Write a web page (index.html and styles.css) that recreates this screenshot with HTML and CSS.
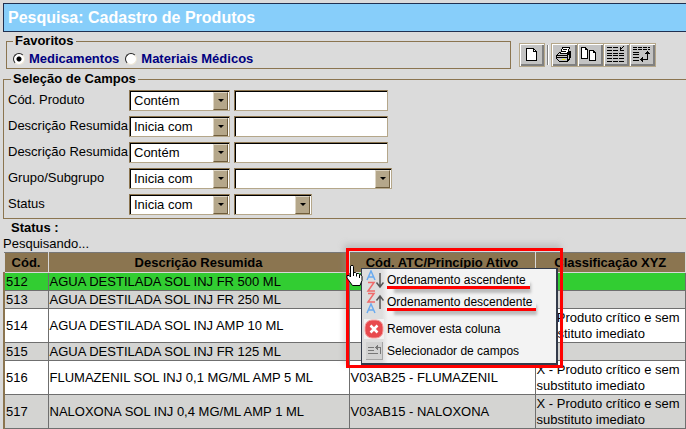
FILE: index.html
```html
<!DOCTYPE html>
<html lang="pt-BR">
<head>
<meta charset="utf-8">
<title>Pesquisa: Cadastro de Produtos</title>
<link rel="stylesheet" href="styles.css">
</head>
<body>
<h1 class="title">Pesquisa: Cadastro de Produtos</h1>
<form class="search">
  <div class="top">
    <fieldset class="favorites">
      <legend>Favoritos</legend>
      <label><input type="radio" name="fav" checked>Medicamentos</label>
      <label><input type="radio" name="fav">Materiais Médicos</label>
    </fieldset>
    <div class="toolbar">
      <button type="button" class="tool" aria-label="Novo"><svg width="20" height="18" shape-rendering="crispEdges"><path d="M4.500 2.500h7l3 3v9h-10z" fill="#fff" stroke="#000"/><path d="M11.500 2.500v3h3" fill="none" stroke="#000"/></svg></button>
      <span class="divider"></span>
      <div class="group">
        <button type="button" class="tool" aria-label="Imprimir"><svg width="20" height="18" shape-rendering="crispEdges"><path d="M2.500 9.500l3-3h8l3-1v6l-3 4h-8l-3-3z" fill="#c3c3c3" stroke="#000"/><path d="M6.500 7.500l2-6h7l-2 6z" fill="#fff" stroke="#000"/><path d="M9 3.500h4M8 5.500h4M3 9.500h10M13 9.500l3-3M3 11.500h10M13.500 9v6M15 8v5" fill="none" stroke="#000"/><path d="M8 13.500h3" stroke="#ee0"/></svg></button>
        <button type="button" class="tool" aria-label="Copiar"><svg width="20" height="18" shape-rendering="crispEdges"><path d="M1.500 1.500h4l2 2v9h-6zM9.500 4.500h4l2 2v8h-6z" fill="#fff" stroke="#000"/><path d="M5.500 1.500v2h2M13.500 4.500v2h2" fill="none" stroke="#000"/></svg></button>
        <button type="button" class="tool" aria-label="Recolher colunas"><svg width="20" height="18" shape-rendering="crispEdges"><path d="M1 1.500h5M7 1.500h5M1 4.500h5M7 4.500h5M1 7.500h5M7 7.500h5M13 7.500h5M1 9.500h5M7 9.500h5M13 9.500h5M1 12.500h5M7 12.500h5M13 12.500h5M1 15.500h5M7 15.500h5M13 15.500h5M18 0l-4 4M14.500 1v3.500h3" fill="none" stroke="#000"/></svg></button>
        <button type="button" class="tool" aria-label="Selecionar campos"><svg width="20" height="18" shape-rendering="crispEdges"><path d="M1 1.500h4M6 1.500h4M11 1.500h4M16 1.500h2M1 3.500h4M6 3.500h4M11 3.500h4M16 3.500h2M1 6.500h6M1 8.500h6M1 11.500h6M1 14.500h6M11 13.500h4.500V7" fill="none" stroke="#000"/><path d="M11 11v5l-3-2.500zM13 8h5l-2.500-3z"/></svg></button>
      </div>
    </div>
  </div>
  <fieldset class="fields">
    <legend>Seleção de Campos</legend>
    <div class="row"><label for="f1">Cód. Produto</label><span class="combo"><select aria-label="Operador código"><option>Contém</option></select></span><input id="f1" class="text" type="text"></div>
    <div class="row"><label for="f2">Descrição Resumida</label><span class="combo"><select aria-label="Operador descrição"><option>Inicia com</option></select></span><input id="f2" class="text" type="text"></div>
    <div class="row"><label for="f3">Descrição Resumida</label><span class="combo"><select aria-label="Operador descrição 2"><option>Contém</option></select></span><input id="f3" class="text" type="text"></div>
    <div class="row"><label for="f4">Grupo/Subgrupo</label><span class="combo"><select aria-label="Operador grupo"><option>Inicia com</option></select></span><span class="combo wide"><select id="f4"><option></option></select></span></div>
    <div class="row"><label for="f5">Status</label><span class="combo"><select aria-label="Operador status"><option>Inicia com</option></select></span><span class="combo small"><select id="f5"><option></option></select></span></div>
  </fieldset>
</form>
<p class="status">Status :</p>
<p class="progress">Pesquisando...</p>
<div class="results">
  <table>
    <colgroup><col class="c1"><col class="c2"><col class="c3"><col class="c4"></colgroup>
    <thead><tr><th>Cód.</th><th>Descrição Resumida</th><th>Cód. ATC/Princípio Ativo</th><th>Classificação XYZ</th></tr></thead>
    <tbody>
      <tr class="selected"><td>512</td><td>AGUA DESTILADA SOL INJ FR 500 ML</td><td></td><td></td></tr>
      <tr class="alt"><td>513</td><td>AGUA DESTILADA SOL INJ FR 250 ML</td><td></td><td></td></tr>
      <tr class="tall"><td>514</td><td>AGUA DESTILADA SOL INJ AMP 10 ML</td><td></td><td>X - Produto crítico e sem substituto imediato</td></tr>
      <tr class="alt"><td>515</td><td>AGUA DESTILADA SOL INJ FR 125 ML</td><td></td><td></td></tr>
      <tr class="tall"><td>516</td><td>FLUMAZENIL SOL INJ 0,1 MG/ML AMP 5 ML</td><td>V03AB25 - FLUMAZENIL</td><td>X - Produto crítico e sem substituto imediato</td></tr>
      <tr class="tall alt"><td>517</td><td>NALOXONA SOL INJ 0,4 MG/ML AMP 1 ML</td><td>V03AB15 - NALOXONA</td><td>X - Produto crítico e sem substituto imediato</td></tr>
    </tbody>
  </table>
  <div class="callout">
    <div class="menu">
      <button type="button" class="item"><svg width="21" height="22"><g fill="none" stroke-width="1.500"><path d="M4 10L8 1l4 9M5.500 7h5" stroke="#6aabf0"/><path d="M5 12.500h6l-6 8.500h7" stroke="#f06a6a"/><path d="M17 3v14M13.500 12.500l3.500 4.500 3.500-4.500" stroke="#555"/></g></svg><span class="marked">Ordenamento ascendente</span></button>
      <button type="button" class="item"><svg width="21" height="22"><g fill="none" stroke-width="1.500"><path d="M5 1.500h6L5 10h7" stroke="#f06a6a"/><path d="M4 21l4-9 4 9M5.500 18h5" stroke="#6aabf0"/><path d="M17 17V4M13.500 8.500L17 4l3.500 4.500" stroke="#555"/></g></svg><span class="marked">Ordenamento descendente</span></button>
      <button type="button" class="item remove"><svg width="21" height="20"><rect x="1" width="20" height="20" fill="#f2f2f2"/><rect x="2" y="1" width="18" height="18" rx="7" fill="#e84a4e" stroke="#f3a0a0"/><path d="M7.500 6.500l7 7M14.500 6.500l-7 7" stroke="#fff" stroke-width="2.500"/></svg><span>Remover esta coluna</span></button>
      <button type="button" class="item"><svg width="21" height="20" shape-rendering="crispEdges"><path d="M3 1h16v17H3z" fill="#d2d2d2"/><path d="M3 18.500h16.500V1" fill="none" stroke="#a5a5a5"/><path d="M5 6.500h6M5 9.500h6M5 12.500h10M12 6.500h5v6M14.500 4v5M13.500 5v3" fill="none" stroke="#777"/></svg><span>Selecionador de campos</span></button>
    </div>
    <svg class="pointer" width="17" height="22"><path d="M5 .500h2l.500 1v6h2l1 1h2l1 1h1l1.500 2v4l-2 5H6.500L1 13v-2.500h2L4.500 12V1z" fill="#fff" stroke="#000"/><path d="M7.500 7v4M10.500 8.500v3M13.500 10v3" stroke="#000"/></svg>
  </div>
</div>
</body>
</html>
```
FILE: styles.css
```css
* { box-sizing: border-box; }
body {
  margin: 0;
  padding: 3px 0 0 3px;
  background: #dbdbdb;
  color: #000;
  font: 13px/16px "Liberation Sans", Arial, sans-serif;
  overflow: hidden;
}
.title {
  margin: 0;
  height: 29px;
  padding: 0 4px;
  border: 1px solid #203050;
  border-right: 0;
  background: #87cefa;
  color: #fff;
  font-size: 16px;
  line-height: 27px;
}
fieldset { margin: 0; border: 1px solid #8b7550; min-width: 0; }
legend { font-weight: bold; padding: 0 2px; line-height: 16px; }
.top { display: flex; gap: 8px; padding: 1px 0 0 3px; }
.favorites {
  width: 505px;
  height: 36px;
  padding: 0 6px;
  display: flex;
  gap: 6px;
}
.favorites label {
  display: flex;
  align-items: center;
  gap: 4px;
  height: 20px;
  color: #000080;
  font-weight: bold;
}
.favorites input {
  appearance: none;
  width: 12px;
  height: 12px;
  margin: 0;
  border: 1px solid;
  border-color: #222 #eee6d6 #eee6d6 #222;
  border-radius: 50%;
  background: #fff;
}
.favorites input:checked { background: radial-gradient(circle, #000 2px, #fff 3px); }
.toolbar { display: flex; align-items: center; gap: 2px; padding-top: 7px; height: 36px; }
.group { display: flex; border-right: 1px solid #b5a78a; }
.tool {
  width: 26px;
  height: 24px;
  padding: 2px;
  border: 1px solid #b5a78a;
  background: #c3c3c3;
  box-shadow: inset 1px 1px #fff, inset -2px -2px #808080;
}
.group .tool { border-right: 0; }
.tool svg { display: block; }
.divider { width: 2px; height: 20px; border-left: 1px solid #808080; border-right: 1px solid #fff; }
.fields { height: 148px; margin-top: 2px; padding: 2px 4px 0; border-right: 0; }
.fields legend { margin-left: 3px; }
.row { display: flex; align-items: center; height: 22px; margin-bottom: 4px; gap: 4px; }
.row label { width: 117px; white-space: nowrap; }
.text, .combo {
  border: 1px solid;
  border-color: #8b7550 #b5a78a #b5a78a #8b7550;
  outline: 0;
  background: #fff;
  height: 21px;
  box-shadow: inset 1px 1px #000;
}
.text { width: 154px; }
.combo { position: relative; width: 101px; }
.combo.wide { width: 158px; }
.combo.small { width: 78px; }
.combo select {
  appearance: none;
  width: 100%;
  height: 19px;
  margin: 0;
  padding: 1px 16px 0 4px;
  border: 0;
  background: transparent;
  color: #000;
  font: inherit;
}
.combo::before {
  content: "";
  position: absolute;
  top: 1px;
  right: 1px;
  bottom: 0;
  width: 13px;
  background: #b5a78a;
  border: 1px solid;
  border-color: #ddd5c4 #6f5d3c #6f5d3c #ddd5c4;
  pointer-events: none;
}
.combo::after {
  content: "";
  position: absolute;
  top: 8px;
  right: 5px;
  border: 3px solid transparent;
  border-top-color: #000;
  border-bottom: 0;
  pointer-events: none;
}
.status, .progress { margin: 0; }
.status { padding: 1px 0 0 8px; font-weight: bold; }
.results { position: relative; }
table { width: 100%; border-collapse: collapse; table-layout: fixed; }
.c1 { width: 44px; }
.c2 { width: 301px; }
.c3 { width: 186px; }
th {
  height: 20px;
  padding: 0;
  border: 1px solid #d8d8d8;
  border-top-color: #777;
  background: #8b7550;
  line-height: 16px;
}
tbody { border-left: 2px solid #8b7550; border-right: 1px solid #777; }
td { height: 18px; padding: 1px 1px 0; border: 1px solid #6f6f6f; background: #fff; line-height: 16px; }
.tall td { height: 34px; }
.alt td { background: #d4d4d2; }
.selected td { background: #32cd32; }
.callout {
  position: absolute;
  left: 343px;
  top: -4px;
  width: 217px;
  padding: 17px 2px 0 12px;
  border: 3px solid #f00;
  box-shadow: -2px -4px 6px rgba(150, 150, 150, .4);
}
.menu {
  padding: 1px;
  border: 1px solid #333a4a;
  border-width: 1px 2px 2px 1px;
  background: linear-gradient(90deg, #dedede 0, #dedede 20px, #f3f3f3 26px);
}
.item {
  display: flex;
  align-items: center;
  gap: 3px;
  width: 100%;
  height: 22px;
  padding: 0;
  border: 0;
  background: none;
  color: #000;
  font: inherit;
  font-size: 12px;
  white-space: nowrap;
}
.remove { margin-top: 4px; }
.marked {
  height: 16px;
  padding-right: 4px;
  border-bottom: 3px solid #f00;
  box-shadow: 4px 7px 3px -3px #bbb;
  line-height: 14px;
}
.pointer { position: absolute; left: -3px; top: 14px; }
```
